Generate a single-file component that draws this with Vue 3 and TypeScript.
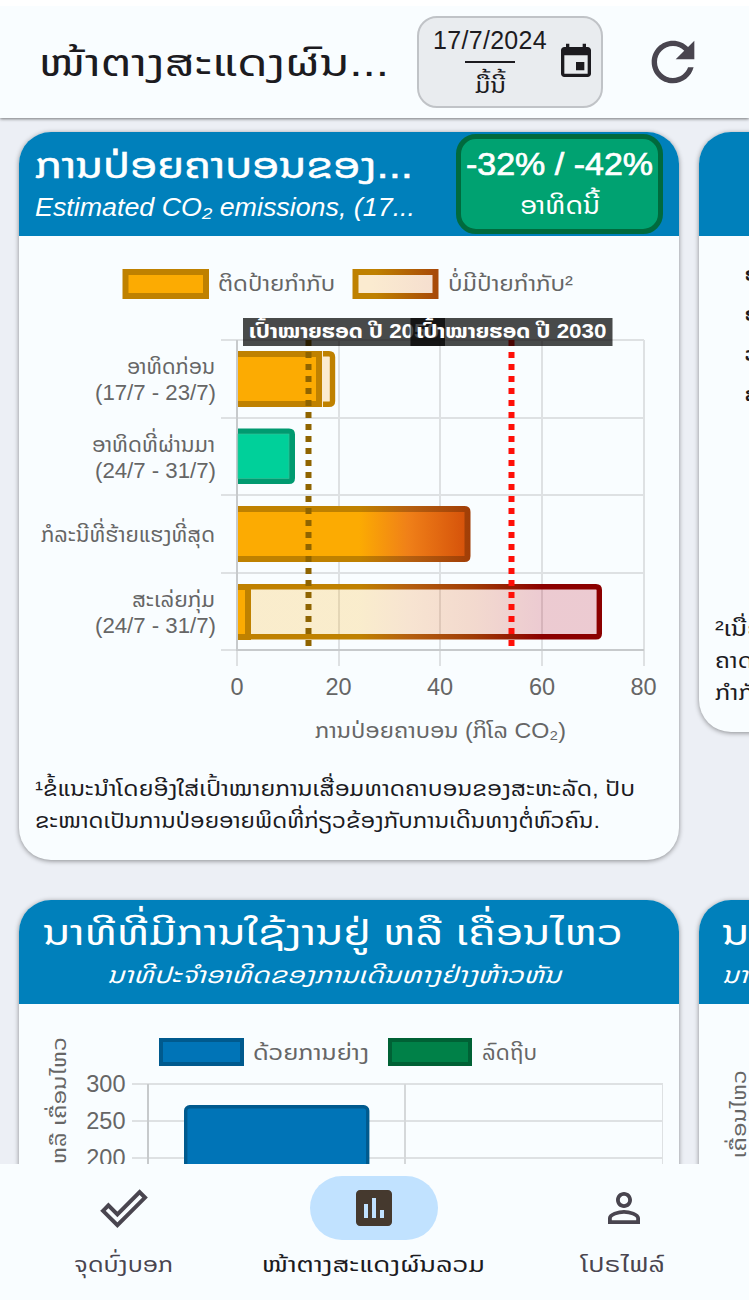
<script setup lang="ts">
import { h } from 'vue'

interface Label { x: number; y: number; w: number; text: string; size?: number }

// A line of text set to an exact measure: w/h are the line box, base the baseline.
const Fit = (props: { w: number; h: number; base: number; text: string }) =>
  h('svg', { width: props.w, height: props.h, style: 'display:block;flex:none;overflow:visible' }, [
    h('text', { x: 0, y: props.base, textLength: props.w, lengthAdjust: 'spacingAndGlyphs', fill: 'currentColor' }, props.text),
  ])
Fit.props = ['w', 'h', 'base', 'text']

const gridX: number[] = [339, 440, 542, 644]
const gridY: number[] = [340, 418, 495, 573]
const xTicks = [
  { x: 237, v: 0 }, { x: 338.5, v: 20 }, { x: 440, v: 40 }, { x: 542, v: 60 }, { x: 643.5, v: 80 },
]
const rowLabels: Label[] = [
  { x: 127, y: 374, w: 88, text: 'ອາທິດກ່ອນ' },
  { x: 95, y: 400, w: 121, text: '(17/7 - 23/7)', size: 23 },
  { x: 92, y: 452, w: 123, text: 'ອາທິດທີ່ຜ່ານມາ' },
  { x: 95, y: 478, w: 121, text: '(24/7 - 31/7)', size: 23 },
  { x: 41, y: 542, w: 174, text: 'ກໍລະນີທີ່ຮ້າຍແຮງທີ່ສຸດ' },
  { x: 132, y: 607, w: 83, text: 'ສະເລ່ຍກຸ່ມ' },
  { x: 95, y: 633, w: 121, text: '(24/7 - 31/7)', size: 23 },
]
const legend: Label[] = [
  { x: 218, y: 291, w: 117, text: 'ຕິດປ້າຍກຳກັບ' },
  { x: 448, y: 291, w: 125, text: 'ບໍ່ມີປ້າຍກຳກັບ²' },
]
const minutes = [{ y: 1084, v: 300 }, { y: 1121, v: 250 }, { y: 1158, v: 200 }]
</script>

<template>
  <div class="screen" lang="lo">
    <header class="topbar">
      <h1 class="page-title"><Fit :w="350" :h="60" :base="44" text="ໜ້າຕາງສະແດງຜົນ..." /></h1>
      <button class="date">
        <span class="date-text">
          <span class="day">17/7/2024</span>
          <span class="rule"></span>
          <Fit class="today" :w="31" :h="34" :base="29" text="ມື້ນີ້" />
        </span>
        <svg class="cal" viewBox="0 0 24 24"><path fill="#1c1b1f" d="M17 12h-5v5h5v-5zM16 1v2H8V1H6v2H5c-1.11 0-1.99.9-1.99 2L3 19c0 1.1.89 2 2 2h14c1.1 0 2-.9 2-2V5c0-1.1-.9-2-2-2h-1V1h-2zm3 18H5V8h14v11z" /></svg>
      </button>
      <svg class="refresh" viewBox="0 0 24 24"><path fill="#49454f" d="M17.65 6.35C16.2 4.9 14.21 4 12 4c-4.42 0-7.99 3.58-8 8s3.57 8 8 8c3.73 0 6.84-2.55 7.73-6h-2.08c-.82 2.33-3.04 4-5.65 4-3.31 0-6-2.69-6-6s2.69-6 6-6c1.66 0 3.14.69 4.22 1.78L13 11h7V4l-2.35 2.35z" /></svg>
    </header>

    <main class="board">
      <div class="row row-one">
        <section class="card">
          <div class="card-head left">
            <div class="heads">
              <h2 class="title bold"><Fit :w="378" :h="62" :base="44" text="ການປ່ອຍຄາບອນຂອງ..." /></h2>
              <p class="sub latin"><Fit :w="380" :h="28" :base="20" text="Estimated CO₂ emissions, (17..." /></p>
            </div>
            <div class="badge">
              <strong><Fit :w="187" :h="50" :base="36" text="-32% / -42%" /></strong>
              <Fit class="week" :w="80" :h="34" :base="25" text="ອາທິດນີ້" />
            </div>
          </div>
          <svg class="chart" viewBox="19 236 660 520" width="660" height="520">
            <defs>
              <linearGradient id="fire" gradientUnits="userSpaceOnUse" x1="237" x2="644" y1="0" y2="0">
                <stop offset="0.3" stop-color="#fcab02" /><stop offset="0.42" stop-color="#f08018" /><stop offset="0.57" stop-color="#d4500a" />
              </linearGradient>
              <linearGradient id="edge" gradientUnits="userSpaceOnUse" x1="237" x2="644" y1="0" y2="0">
                <stop offset="0.3" stop-color="#bf8100" /><stop offset="0.42" stop-color="#b56010" /><stop offset="0.58" stop-color="#a03c06" /><stop offset="0.75" stop-color="#8b0000" />
              </linearGradient>
              <linearGradient id="pale" gradientUnits="userSpaceOnUse" x1="237" x2="644" y1="0" y2="0">
                <stop offset="0.3" stop-color="#fcab02" /><stop offset="0.42" stop-color="#f08018" /><stop offset="0.58" stop-color="#d94a0a" /><stop offset="0.75" stop-color="#b8001a" />
              </linearGradient>
              <linearGradient id="keyEdge"><stop offset="0.25" stop-color="#bf8100" /><stop offset="1" stop-color="#a84a08" /></linearGradient>
              <linearGradient id="keyFill"><stop offset="0.2" stop-color="#fbebd0" /><stop offset="1" stop-color="#f5decf" /></linearGradient>
            </defs>
            <rect x="125.5" y="272" width="80.5" height="24" fill="#fcab02" stroke="#bf8100" stroke-width="6" />
            <rect x="355.5" y="272" width="80" height="24" fill="url(#keyFill)" stroke="url(#keyEdge)" stroke-width="6" />
            <text v-for="l in legend" :key="l.text" class="lbl" :x="l.x" :y="l.y" :textLength="l.w" lengthAdjust="spacingAndGlyphs">{{ l.text }}</text>

            <g stroke="#dee1e3" stroke-width="2">
              <line v-for="y in gridY" :key="y" x1="221" x2="644" :y1="y" :y2="y" />
              <line v-for="x in gridX" :key="x" :x1="x" :x2="x" y1="340" y2="666" />
              <line x1="237" x2="237" y1="650" y2="666" />
              <line x1="221" x2="237" y1="650" y2="650" />
            </g>
            <path d="M237 340V650H644" fill="none" stroke="#c7cacc" stroke-width="2" />

            <path d="M322 353.700H329Q332.500 353.700 332.500 357V401Q332.500 404.300 329 404.300H322" fill="#fbebd0" stroke="#bf8100" stroke-width="5.4" />
            <rect x="238" y="351" width="84" height="56" fill="#bf8100" />
            <rect x="238" y="357" width="78" height="44" fill="#fcab02" />
            <path d="M322.5 351V407" stroke="#fbebd0" stroke-width="1" />

            <path d="M238 428.500H289Q295 428.500 295 434.500V478Q295 484 289 484H238Z" fill="#009a70" />
            <rect x="238" y="434" width="51" height="44.500" fill="#00d09a" stroke="#35bf96" stroke-width=".7" />

            <path d="M238 506H464.500Q470.500 506 470.500 512V556Q470.500 562 464.500 562H238Z" fill="url(#edge)" />
            <rect x="238" y="512" width="226.500" height="44" fill="url(#fire)" />

            <rect x="251" y="589" width="346" height="45" fill="url(#pale)" fill-opacity=".2" />
            <path d="M251 586.700H596Q599.300 586.700 599.300 590V633.500Q599.300 636.800 596 636.800H251" fill="none" stroke="url(#edge)" stroke-width="5.4" />
            <rect x="238" y="584" width="13" height="56" fill="#bf8100" />
            <rect x="238" y="590" width="7" height="44" fill="#fcab02" />

            <line x1="308.500" x2="308.500" y1="340" y2="646" stroke="#8f6400" stroke-width="6" stroke-dasharray="6 6" />
            <line x1="511.500" x2="511.500" y1="340" y2="646" stroke="#ff0f08" stroke-width="6" stroke-dasharray="6 6" />
            <rect x="243" y="318" width="202" height="28" fill="#000" fill-opacity=".71" />
            <text class="goal" x="249" y="338" textLength="190" lengthAdjust="spacingAndGlyphs">ເປົ້າໝາຍຮອດ ປີ 2050</text>
            <rect x="410.500" y="318" width="202" height="28" fill="#000" fill-opacity=".71" />
            <text class="goal" x="416.500" y="338" textLength="190" lengthAdjust="spacingAndGlyphs">ເປົ້າໝາຍຮອດ ປີ 2030</text>

            <text v-for="(l, i) in rowLabels" :key="i" class="lbl" :x="l.x" :y="l.y" :textLength="l.w" :font-size="l.size" lengthAdjust="spacingAndGlyphs">{{ l.text }}</text>
            <text v-for="t in xTicks" :key="t.v" class="num" :x="t.x" y="695" text-anchor="middle">{{ t.v }}</text>
            <text class="lbl" x="315" y="738" textLength="251" lengthAdjust="spacingAndGlyphs">ການປ່ອຍຄາບອນ (ກິໂລ CO₂)</text>
          </svg>
          <div class="note">
            <Fit :w="600" :h="32" :base="22" text="¹ຂໍ້ແນະນຳໂດຍອີງໃສ່ເປົ້າໝາຍການເສື່ອມທາດຄາບອນຂອງສະຫະລັດ, ປັບ" />
            <Fit :w="565" :h="32" :base="22" text="ຂະໜາດເປັນການປ່ອຍອາຍພິດທີ່ກ່ຽວຂ້ອງກັບການເດີນທາງຕໍ່ຫົວຄົນ." />
          </div>
        </section>

        <section class="card short">
          <div class="card-head"></div>
          <div class="peek">
            <b>ອ</b><b>ອ</b><b>ວ</b><b>ສ</b>
          </div>
          <div class="peek-note">
            <Fit :w="58" :h="32" :base="22" text="²ເນື່ອງ" />
            <Fit :w="62" :h="32" :base="22" text="ຄາດຄະ" />
            <Fit :w="54" :h="32" :base="22" text="ກຳກັບ" />
          </div>
        </section>
      </div>

      <div class="row row-two">
        <section class="card">
          <div class="card-head centre">
            <h2 class="title"><Fit :w="580" :h="62" :base="45" text="ນາທີທີ່ມີການໃຊ້ງານຢູ່ ຫລື ເຄື່ອນໄຫວ" /></h2>
            <p class="sub"><Fit :w="454" :h="28" :base="21" text="ນາທີປະຈຳອາທິດຂອງການເດີນທາງຢ່າງຫ້າວຫັນ" /></p>
          </div>
          <svg class="chart" viewBox="19 1004 660 160" width="660" height="160">
            <rect x="161" y="1040" width="81" height="24" fill="#0074b7" stroke="#005a8e" stroke-width="4" />
            <text class="lbl" x="253" y="1060" textLength="116" lengthAdjust="spacingAndGlyphs">ດ້ວຍການຍ່າງ</text>
            <rect x="390" y="1040" width="80" height="24" fill="#008148" stroke="#006135" stroke-width="4" />
            <text class="lbl" x="482" y="1060" textLength="55" lengthAdjust="spacingAndGlyphs">ລົດຖີບ</text>
            <g v-for="m in minutes" :key="m.v">
              <line x1="132" x2="663" :y1="m.y" :y2="m.y" stroke="#dee1e3" stroke-width="2" />
              <text class="num" x="125.500" :y="m.y + 8" text-anchor="end">{{ m.v }}</text>
            </g>
            <line x1="405" x2="405" y1="1084" y2="1170" stroke="#d5d8da" stroke-width="2" />
            <line x1="662.500" x2="662.500" y1="1084" y2="1170" stroke="#dee1e3" stroke-width="1" />
            <line x1="148" x2="148" y1="1084" y2="1170" stroke="#c7cacc" stroke-width="2" />
            <rect x="185.700" y="1106.700" width="182" height="80" rx="4" fill="#0074b7" stroke="#005a8e" stroke-width="3.400" />
            <text class="axis" transform="translate(65.500 1164) rotate(-90)" textLength="127" lengthAdjust="spacingAndGlyphs">ຫລື ເຄື່ອນໄຫວ</text>
          </svg>
        </section>
        <section class="card">
          <div class="card-head peek-head">
            <h2 class="title"><Fit :w="74" :h="62" :base="45" text="ນາທີ" /></h2>
            <p class="sub"><Fit :w="72" :h="28" :base="21" text="ນາທີປະ" /></p>
          </div>
          <svg class="chart" viewBox="699 1004 660 160" width="660" height="160">
            <text class="axis" transform="translate(745.500 1158) rotate(-90)" textLength="88" lengthAdjust="spacingAndGlyphs">ເຄື່ອນໄຫວ</text>
          </svg>
        </section>
      </div>
    </main>

    <nav class="tabs">
      <a class="tab">
        <span class="pill"><svg viewBox="0 0 24 24"><path fill="none" stroke="#49454f" stroke-width="2" d="M1.500 13.400 4.200 10.700 8.700 15.200 19.800 4.100 22.500 6.800 8.700 20.600Z" /></svg></span>
        <Fit class="tab-text" :w="99" :h="32" :base="24" text="ຈຸດບົ່ງບອກ" />
      </a>
      <a class="tab active">
        <span class="pill"><svg viewBox="0 0 24 24"><path fill="#45392e" d="M19 3H5c-1.100 0-2 .9-2 2v14c0 1.100.9 2 2 2h14c1.100 0 2-.9 2-2V5c0-1.100-.9-2-2-2zM9 17H7v-7h2v7zm4 0h-2V7h2v10zm4 0h-2v-4h2v4z" /></svg></span>
        <Fit class="tab-text" :w="223" :h="32" :base="24" text="ໜ້າຕາງສະແດງຜົນລວມ" />
      </a>
      <a class="tab">
        <span class="pill"><svg viewBox="0 0 24 24"><path fill="#49454f" d="M12 5.900c1.160 0 2.100.94 2.100 2.100s-.94 2.100-2.100 2.100S9.900 9.160 9.900 8s.94-2.100 2.100-2.100m0 9c2.970 0 6.100 1.460 6.100 2.100v1.100H5.900V17c0-.64 3.130-2.100 6.100-2.100M12 4C9.790 4 8 5.790 8 8s1.790 4 4 4 4-1.790 4-4-1.790-4-4-4zm0 9c-2.670 0-8 1.340-8 4v3h16v-3c0-2.660-5.330-4-8-4z" /></svg></span>
        <Fit class="tab-text" :w="84" :h="32" :base="24" text="ໂປຣໄຟລ໌" />
      </a>
    </nav>
  </div>
</template>

<style>
body { margin: 0; overflow: hidden; }
</style>

<style scoped>
.screen { width: 749px; height: 1300px; display: flex; flex-direction: column; overflow: hidden; background: #eceff5; color: #1c1b1f; font-family: "Liberation Sans", "Noto Sans Lao", "DejaVu Sans", sans-serif; }
h1, h2, p { margin: 0; font-weight: 400; white-space: nowrap; }
.topbar { flex: none; box-sizing: border-box; height: 118px; padding: 6px 0 0 39px; display: flex; align-items: center; background: linear-gradient(#fff 6px, #f9fdff 6px); box-shadow: 0 1px 3px rgba(0, 0, 0, .5); z-index: 1; }
.page-title { width: 378px; font-size: 38px; }
.date { box-sizing: border-box; width: 186px; height: 92px; padding: 0 0 0 13px; display: flex; align-items: center; border: 2px solid #c0c3c7; border-radius: 20px; background: #e9ecef; color: #1c1b1f; font-family: inherit; }
.date-text { width: 116px; display: flex; flex-direction: column; align-items: center; }
.day { font-size: 25px; line-height: 30px; letter-spacing: .3px; }
.rule { width: 50px; height: 2px; margin: 6px 0 1px; background: #1c1b1f; }
.today { margin-bottom: 1px; font-size: 22px; }
.cal { width: 40px; height: 40px; margin-left: 8px; }
.refresh { width: 64px; height: 64px; margin-left: 38px; }
.board { flex: none; height: 1046px; box-sizing: border-box; padding: 14px 0 0 19px; display: flex; flex-direction: column; gap: 40px; overflow: hidden; }
.row { display: flex; gap: 20px; align-items: flex-start; }
.row-one { height: 728px; }
.card { flex: none; width: 660px; height: 728px; overflow: hidden; border-radius: 32px; background: #f9fdff; box-shadow: 0 1px 5px rgba(0, 0, 0, .42); }
.short { height: 600px; }
.card-head { box-sizing: border-box; height: 104px; background: #0080bb; color: #fff; }
.left { display: flex; padding: 2px 16px 0; justify-content: space-between; }
.centre { display: flex; flex-direction: column; align-items: center; }
.centre .title { margin-right: 32px; }
.centre .sub { margin-right: 30px; }
.peek-head { padding-left: 23px; }
.heads { width: 400px; }
.title { font-size: 36px; }
.bold { stroke: #fff; stroke-width: .5px; }
.sub { font-size: 23px; font-style: italic; }
.latin { font-size: 25px; }
.badge { box-sizing: border-box; width: 207px; height: 100px; display: flex; flex-direction: column; align-items: center; border: 5px solid #006a3d; border-radius: 20px; background: #00a271; }
.badge strong { font-size: 32px; font-weight: 400; stroke: #fff; stroke-width: .7px; }
.week { font-size: 24px; }
.chart { display: block; }
.lbl { font-size: 22px; fill: #666; }
.axis { font-size: 20px; fill: #666; }
.num { font-size: 23.500px; fill: #666; }
.goal { font-size: 20px; font-weight: 700; fill: #fff; }
.note { padding: 18px 16px 0; font-size: 21px; }
.peek { height: 353px; padding: 18px 0 0 46px; display: flex; flex-direction: column; font-size: 20px; line-height: 40px; }
.peek-note { padding: 7px 16px; font-size: 21px; }
.tabs { flex: none; height: 136px; display: flex; background: #f9fdff; }
.tab { flex: none; width: 248px; display: flex; flex-direction: column; align-items: center; padding-top: 12px; color: #49454f; }
.active { width: 252px; color: #1c1b1f; }
.pill { width: 128px; height: 64px; display: flex; align-items: center; justify-content: center; border-radius: 32px; }
.active .pill { background: #c1e2ff; }
.pill svg { width: 48px; height: 48px; }
.tab-text { margin-top: 8px; margin-right: 2px; font-size: 22px; }
</style>
